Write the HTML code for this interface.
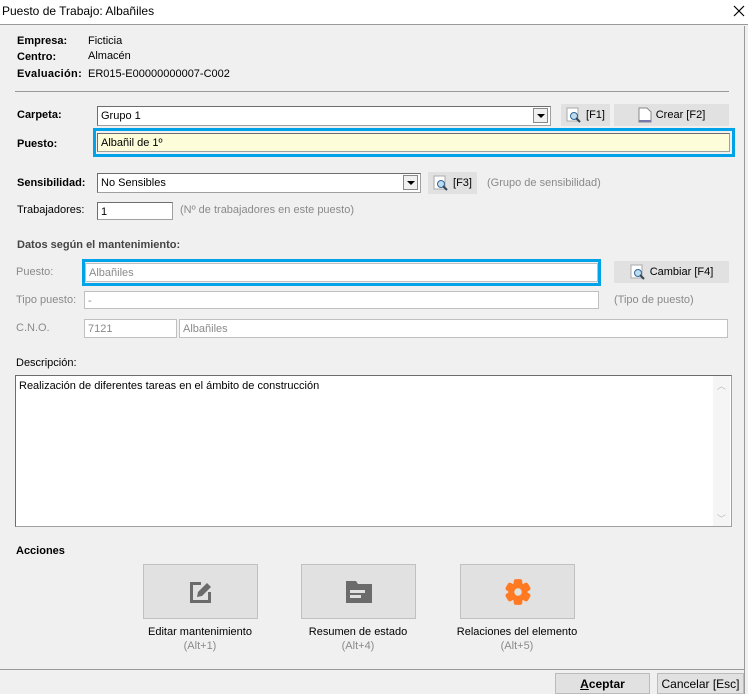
<!DOCTYPE html>
<html><head><meta charset="utf-8"><style>
*{margin:0;padding:0;box-sizing:border-box}
body{width:748px;height:694px;background:#f0f0f0;font-family:"Liberation Sans",sans-serif;font-size:11px;color:#000;position:relative;overflow:hidden}
.a{position:absolute;white-space:nowrap}
.b{font-weight:bold}
.g{color:#8a8a8a}
.in{position:absolute;background:#fff;border:1px solid #a0a0a0;border-top-color:#6d6d6d;border-left-color:#6d6d6d;padding:2px 3px 0;line-height:15px;white-space:nowrap}
.btn{position:absolute;background:#e1e1e1;display:flex;align-items:center;justify-content:center;gap:4px}
.dd{position:absolute;width:15px;height:15px;border:1px solid #888;background:#f0f0f0}
.dd:after{content:"";position:absolute;left:3px;top:5px;border-left:4px solid transparent;border-right:4px solid transparent;border-top:4px solid #000}
.blue{position:absolute;border:3px solid #00a2e8}
.big{position:absolute;top:564px;width:115px;height:55px;background:#e1e1e1;border:1px solid #c0c0c0;display:flex;align-items:center;justify-content:center}
.lab{position:absolute;top:625px;width:200px;text-align:center;line-height:14px}
</style></head><body>
<div class="a" style="left:0;top:0;width:748px;height:25px;background:#fff;border-bottom:1px solid #999"></div>
<div class="a" style="left:2px;top:4px;font-size:12px">Puesto de Trabajo: Albañiles</div>
<svg class="a" style="left:733px;top:5px" width="12" height="12"><path d="M1 1L11 11M11 1L1 11" stroke="#000" stroke-width="1.2"/></svg>
<div class="a" style="left:744px;top:26px;width:1px;height:668px;background:#999"></div>

<div class="a b" style="left:17px;top:35px">Empresa:</div><div class="a" style="left:88px;top:35px">Ficticia</div>
<div class="a b" style="left:17px;top:51px">Centro:</div><div class="a" style="left:88px;top:50px">Almacén</div>
<div class="a b" style="left:17px;top:68px;letter-spacing:.3px">Evaluación:</div><div class="a" style="left:88px;top:68px">ER015-E00000000007-C002</div>
<div class="a" style="left:15px;top:91px;width:714px;height:1px;background:#999"></div>

<div class="a b" style="left:17px;top:109px">Carpeta:</div>
<div class="in" style="left:97px;top:106px;width:454px;height:20px">Grupo 1</div>
<div class="dd" style="left:533px;top:108px"></div>
<div class="btn" style="left:561px;top:104px;width:49px;height:22px"><svg width="16" height="16"><rect x="1" y="1" width="11" height="13" fill="#fff" stroke="#aaa"/><circle cx="8" cy="9" r="3.5" fill="#bde" stroke="#369"/><line x1="10" y1="11" x2="14" y2="15" stroke="#345" stroke-width="2"/></svg>[F1]</div>
<div class="btn" style="left:614px;top:104px;width:115px;height:22px"><svg width="14" height="16"><path d="M1 1h8l4 4v10H1z" fill="#fff" stroke="#888"/><rect x="1" y="13" width="12" height="2" fill="#77a"/></svg>Crear&nbsp;[F2]</div>

<div class="blue" style="left:93px;top:128px;width:642px;height:29px"></div>
<div class="a b" style="left:17px;top:138px">Puesto:</div>
<div class="in" style="left:97px;top:133px;width:633px;height:19px;background:#fdfdd9">Albañil de 1º</div>

<div class="a b" style="left:17px;top:177px">Sensibilidad:</div>
<div class="in" style="left:97px;top:173px;width:324px;height:20px">No Sensibles</div>
<div class="dd" style="left:403px;top:175px"></div>
<div class="btn" style="left:428px;top:172px;width:49px;height:22px"><svg width="16" height="16"><rect x="1" y="1" width="11" height="13" fill="#fff" stroke="#aaa"/><circle cx="8" cy="9" r="3.5" fill="#bde" stroke="#369"/><line x1="10" y1="11" x2="14" y2="15" stroke="#345" stroke-width="2"/></svg>[F3]</div>
<div class="a g" style="left:487px;top:177px">(Grupo de sensibilidad)</div>

<div class="a" style="left:17px;top:204px">Trabajadores:</div>
<div class="in" style="left:97px;top:202px;width:76px;height:18px;line-height:14px">1</div>
<div class="a g" style="left:180px;top:204px">(Nº de trabajadores en este puesto)</div>

<div class="a b" style="left:17px;top:239px;color:#444">Datos según el mantenimiento:</div>

<div class="a g" style="left:16px;top:266px">Puesto:</div>
<div class="blue" style="left:82px;top:259px;width:519px;height:27px"></div>
<div class="in g" style="left:85px;top:263px;width:513px;height:19px;border-color:#c0c0c0">Albañiles</div>
<div class="btn" style="left:614px;top:261px;width:115px;height:22px"><svg width="16" height="16"><rect x="1" y="1" width="11" height="13" fill="#fff" stroke="#aaa"/><circle cx="8" cy="9" r="3.5" fill="#bde" stroke="#369"/><line x1="10" y1="11" x2="14" y2="15" stroke="#345" stroke-width="2"/></svg>Cambiar&nbsp;[F4]</div>

<div class="a g" style="left:16px;top:294px">Tipo puesto:</div>
<div class="in g" style="left:84px;top:291px;width:515px;height:18px;line-height:14px;border-color:#c0c0c0">-</div>
<div class="a g" style="left:614px;top:294px">(Tipo de puesto)</div>

<div class="a g" style="left:16px;top:322px">C.N.O.</div>
<div class="in g" style="left:84px;top:319px;width:93px;height:19px;line-height:15px;border-color:#c0c0c0">7121</div>
<div class="in g" style="left:179px;top:319px;width:549px;height:19px;line-height:15px;border-color:#c0c0c0">Albañiles</div>

<div class="a" style="left:16px;top:357px">Descripción:</div>
<div class="in" style="left:15px;top:375px;width:717px;height:152px;line-height:15px;padding-top:3px">Realización de diferentes tareas en el ámbito de construcción</div>
<div class="a" style="left:713px;top:376px;width:17px;height:150px;background:#f5f5f5"></div>
<div class="a" style="left:717px;top:379px;color:#bbb;font-size:9px">︿</div>
<div class="a" style="left:717px;top:512px;color:#bbb;font-size:9px">﹀</div>

<div class="a b" style="left:16px;top:545px">Acciones</div>
<div class="big" style="left:143px"><svg width="26" height="26" viewBox="0 0 26 26"><path d="M2 3h11v3H5v15h15v-8h3v11H2z" fill="#6b6b6b"/><path d="M9 18l1-5 9-9 4 4-9 9z" fill="#6b6b6b"/></svg></div>
<div class="big" style="left:301px"><svg width="28" height="24" viewBox="0 0 28 24"><path d="M1 1h10l2 3h14v19H1z" fill="#6b6b6b"/><rect x="5" y="10" width="15" height="3" fill="#e1e1e1"/><rect x="5" y="15" width="11" height="3" fill="#e1e1e1"/></svg></div>
<div class="big" style="left:460px"><svg width="30" height="30" viewBox="0 0 28 28"><g fill="#ff7a21"><circle cx="14" cy="14" r="9"/><rect x="10" y="2" width="8" height="24" rx="2"/><rect x="10" y="2" width="8" height="24" rx="2" transform="rotate(60 14 14)"/><rect x="10" y="2" width="8" height="24" rx="2" transform="rotate(-60 14 14)"/></g><circle cx="14" cy="14" r="3.5" fill="#e1e1e1"/></svg></div>
<div class="lab" style="left:100px">Editar mantenimiento<br><span class="g">(Alt+1)</span></div>
<div class="lab" style="left:258px">Resumen de estado<br><span class="g">(Alt+4)</span></div>
<div class="lab" style="left:417px">Relaciones del elemento<br><span class="g">(Alt+5)</span></div>

<div class="a" style="left:0;top:669px;width:745px;height:1px;background:#999"></div>
<div class="btn" style="left:555px;top:673px;width:95px;height:21px;border:1px solid #bbb;font-weight:bold;font-size:12px"><span><u>A</u>ceptar</span></div>
<div class="btn" style="left:657px;top:673px;width:87px;height:21px;border:1px solid #bbb;font-size:12px">Cancelar&nbsp;[Esc]</div>
</body></html>
